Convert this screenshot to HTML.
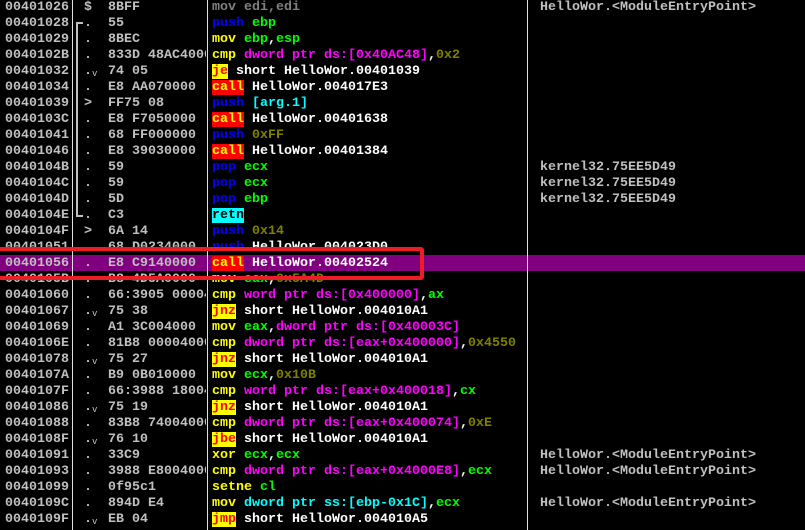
<!DOCTYPE html>
<html><head><meta charset="utf-8"><style>
html,body{margin:0;padding:0;background:#000;width:805px;height:530px;overflow:hidden}
body{position:relative;font-family:"Liberation Mono","DejaVu Sans Mono",monospace;font-size:13.33px;font-weight:bold}
.r{position:absolute;left:0;width:805px;height:16px;line-height:16px;white-space:pre}
.c{position:absolute;top:1px;height:16px;overflow:hidden}
.a{left:5px;width:66px;color:#c0c0c0}
.m{left:84px;width:22px;color:#c0c0c0}
.b{left:108px;width:98px;color:#c0c0c0}
.d{left:212px;width:314px;color:#fff}
.k{left:540px;width:265px;color:#c0c0c0}
.sep{position:absolute;top:0;width:1px;height:530px;background:#e0e0e0}
.Y{color:#ffff00}.B{color:#0000ff}.G{color:#00ff00}.M{color:#ff00ff}.O{color:#808000}.C{color:#00ffff}.W{color:#fff}
.call,.j,.ret{display:inline-block;height:15px;line-height:15px;vertical-align:top;margin-top:0px}
.call{background:#ff0000;color:#ffff00}
.j{background:#ffff00;color:#ff0000}
.ret{background:#00ffff;color:#000}
.hl{background:#800080}
.v{font-size:9px;font-weight:normal;vertical-align:-2px}
</style></head><body>
<div class="r hl" style="top:255px"></div>

<div class="r" style="top:-1px"><span class="c a">00401026</span><span class="c m">$</span><span class="c b">8BFF</span><span class="c d" style="color:#808080">mov edi,edi</span><span class="c k">HelloWor.&lt;ModuleEntryPoint&gt;</span></div>
<div class="r" style="top:15px"><span class="c a">00401028</span><span class="c m">.</span><span class="c b">55</span><span class="c d"><span class="B">push</span> <span class="G">ebp</span></span></div>
<div class="r" style="top:31px"><span class="c a">00401029</span><span class="c m">.</span><span class="c b">8BEC</span><span class="c d"><span class="Y">mov</span> <span class="G">ebp</span>,<span class="G">esp</span></span></div>
<div class="r" style="top:47px"><span class="c a">0040102B</span><span class="c m">.</span><span class="c b">833D 48AC4000</span><span class="c d"><span class="Y">cmp</span> <span class="M">dword ptr ds:[0x40AC48]</span>,<span class="O">0x2</span></span></div>
<div class="r" style="top:63px"><span class="c a">00401032</span><span class="c m">.<span class="v">v</span></span><span class="c b">74 05</span><span class="c d"><span class="j">je</span> short HelloWor.00401039</span></div>
<div class="r" style="top:79px"><span class="c a">00401034</span><span class="c m">.</span><span class="c b">E8 AA070000</span><span class="c d"><span class="call">call</span> HelloWor.004017E3</span></div>
<div class="r" style="top:95px"><span class="c a">00401039</span><span class="c m">&gt;</span><span class="c b">FF75 08</span><span class="c d"><span class="B">push</span> <span class="C">[arg.1]</span></span></div>
<div class="r" style="top:111px"><span class="c a">0040103C</span><span class="c m">.</span><span class="c b">E8 F7050000</span><span class="c d"><span class="call">call</span> HelloWor.00401638</span></div>
<div class="r" style="top:127px"><span class="c a">00401041</span><span class="c m">.</span><span class="c b">68 FF000000</span><span class="c d"><span class="B">push</span> <span class="O">0xFF</span></span></div>
<div class="r" style="top:143px"><span class="c a">00401046</span><span class="c m">.</span><span class="c b">E8 39030000</span><span class="c d"><span class="call">call</span> HelloWor.00401384</span></div>
<div class="r" style="top:159px"><span class="c a">0040104B</span><span class="c m">.</span><span class="c b">59</span><span class="c d"><span class="B">pop</span> <span class="G">ecx</span></span><span class="c k">kernel32.75EE5D49</span></div>
<div class="r" style="top:175px"><span class="c a">0040104C</span><span class="c m">.</span><span class="c b">59</span><span class="c d"><span class="B">pop</span> <span class="G">ecx</span></span><span class="c k">kernel32.75EE5D49</span></div>
<div class="r" style="top:191px"><span class="c a">0040104D</span><span class="c m">.</span><span class="c b">5D</span><span class="c d"><span class="B">pop</span> <span class="G">ebp</span></span><span class="c k">kernel32.75EE5D49</span></div>
<div class="r" style="top:207px"><span class="c a">0040104E</span><span class="c m">.</span><span class="c b">C3</span><span class="c d"><span class="ret">retn</span></span></div>
<div class="r" style="top:223px"><span class="c a">0040104F</span><span class="c m">&gt;</span><span class="c b">6A 14</span><span class="c d"><span class="B">push</span> <span class="O">0x14</span></span></div>
<div class="r" style="top:239px"><span class="c a">00401051</span><span class="c m">.</span><span class="c b">68 D0234000</span><span class="c d"><span class="B">push</span> HelloWor.004023D0</span></div>
<div class="r" style="top:255px"><span class="c a">00401056</span><span class="c m">.</span><span class="c b">E8 C9140000</span><span class="c d"><span class="call">call</span> HelloWor.00402524</span></div>
<div class="r" style="top:271px"><span class="c a">0040105B</span><span class="c m">.</span><span class="c b">B8 4D5A0000</span><span class="c d"><span class="Y">mov</span> <span class="G">eax</span>,<span class="O">0x5A4D</span></span></div>
<div class="r" style="top:287px"><span class="c a">00401060</span><span class="c m">.</span><span class="c b">66:3905 00004000</span><span class="c d"><span class="Y">cmp</span> <span class="M">word ptr ds:[0x400000]</span>,<span class="G">ax</span></span></div>
<div class="r" style="top:303px"><span class="c a">00401067</span><span class="c m">.<span class="v">v</span></span><span class="c b">75 38</span><span class="c d"><span class="j">jnz</span> short HelloWor.004010A1</span></div>
<div class="r" style="top:319px"><span class="c a">00401069</span><span class="c m">.</span><span class="c b">A1 3C004000</span><span class="c d"><span class="Y">mov</span> <span class="G">eax</span>,<span class="M">dword ptr ds:[0x40003C]</span></span></div>
<div class="r" style="top:335px"><span class="c a">0040106E</span><span class="c m">.</span><span class="c b">81B8 00004000</span><span class="c d"><span class="Y">cmp</span> <span class="M">dword ptr ds:[eax+0x400000]</span>,<span class="O">0x4550</span></span></div>
<div class="r" style="top:351px"><span class="c a">00401078</span><span class="c m">.<span class="v">v</span></span><span class="c b">75 27</span><span class="c d"><span class="j">jnz</span> short HelloWor.004010A1</span></div>
<div class="r" style="top:367px"><span class="c a">0040107A</span><span class="c m">.</span><span class="c b">B9 0B010000</span><span class="c d"><span class="Y">mov</span> <span class="G">ecx</span>,<span class="O">0x10B</span></span></div>
<div class="r" style="top:383px"><span class="c a">0040107F</span><span class="c m">.</span><span class="c b">66:3988 18004000</span><span class="c d"><span class="Y">cmp</span> <span class="M">word ptr ds:[eax+0x400018]</span>,<span class="G">cx</span></span></div>
<div class="r" style="top:399px"><span class="c a">00401086</span><span class="c m">.<span class="v">v</span></span><span class="c b">75 19</span><span class="c d"><span class="j">jnz</span> short HelloWor.004010A1</span></div>
<div class="r" style="top:415px"><span class="c a">00401088</span><span class="c m">.</span><span class="c b">83B8 74004000</span><span class="c d"><span class="Y">cmp</span> <span class="M">dword ptr ds:[eax+0x400074]</span>,<span class="O">0xE</span></span></div>
<div class="r" style="top:431px"><span class="c a">0040108F</span><span class="c m">.<span class="v">v</span></span><span class="c b">76 10</span><span class="c d"><span class="j">jbe</span> short HelloWor.004010A1</span></div>
<div class="r" style="top:447px"><span class="c a">00401091</span><span class="c m">.</span><span class="c b">33C9</span><span class="c d"><span class="Y">xor</span> <span class="G">ecx</span>,<span class="G">ecx</span></span><span class="c k">HelloWor.&lt;ModuleEntryPoint&gt;</span></div>
<div class="r" style="top:463px"><span class="c a">00401093</span><span class="c m">.</span><span class="c b">3988 E8004000</span><span class="c d"><span class="Y">cmp</span> <span class="M">dword ptr ds:[eax+0x4000E8]</span>,<span class="G">ecx</span></span><span class="c k">HelloWor.&lt;ModuleEntryPoint&gt;</span></div>
<div class="r" style="top:479px"><span class="c a">00401099</span><span class="c m">.</span><span class="c b">0f95c1</span><span class="c d"><span class="Y">setne</span> <span class="G">cl</span></span></div>
<div class="r" style="top:495px"><span class="c a">0040109C</span><span class="c m">.</span><span class="c b">894D E4</span><span class="c d"><span class="Y">mov</span> <span class="C">dword ptr ss:[ebp-0x1C]</span>,<span class="G">ecx</span></span><span class="c k">HelloWor.&lt;ModuleEntryPoint&gt;</span></div>
<div class="r" style="top:511px"><span class="c a">0040109F</span><span class="c m">.<span class="v">v</span></span><span class="c b">EB 04</span><span class="c d"><span class="j">jmp</span> short HelloWor.004010A5</span></div>

<div class="sep" style="left:72px"></div>
<div class="sep" style="left:207px"></div>
<div class="sep" style="left:527px"></div>
<div style="position:absolute;left:76px;top:22px;width:2px;height:195px;background:#c0c0c0"></div>
<div style="position:absolute;left:76px;top:22px;width:7px;height:2px;background:#c0c0c0"></div>
<div style="position:absolute;left:76px;top:215px;width:7px;height:2px;background:#c0c0c0"></div>
<div style="position:absolute;left:-4px;top:247px;width:420px;height:25px;border:4px solid #ee1c24;border-radius:3px"></div>
</body></html>
